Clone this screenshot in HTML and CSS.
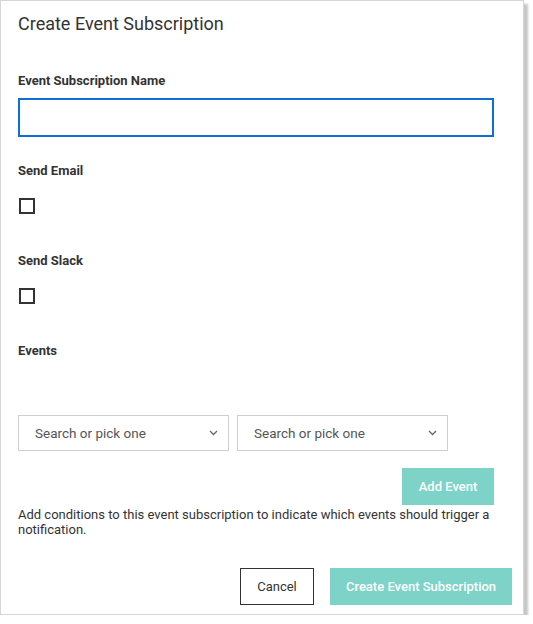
FILE: index.html
```html
<!DOCTYPE html>
<html>
<head>
<meta charset="utf-8">
<link rel="stylesheet" href="styles.css">
</head>
<body>
<div class="dialog">
  <h1 class="title">Create Event Subscription</h1>
  <div class="field name-field">
    <label class="label">Event Subscription Name</label>
    <div class="input"></div>
  </div>
  <div class="field check-field">
    <label class="label">Send Email</label>
    <div class="checkbox"></div>
  </div>
  <div class="field check-field">
    <label class="label">Send Slack</label>
    <div class="checkbox"></div>
  </div>
  <div class="field events-field">
    <label class="label">Events</label>
  </div>
  <div class="selects">
    <div class="select"><span>Search or pick one</span>
      <svg width="9" height="6" viewBox="0 0 9 6"><path d="M1 1l3.5 3.5L8 1" fill="none" stroke="#666" stroke-width="1.3"/></svg>
    </div>
    <div class="select"><span>Search or pick one</span>
      <svg width="9" height="6" viewBox="0 0 9 6"><path d="M1 1l3.5 3.5L8 1" fill="none" stroke="#666" stroke-width="1.3"/></svg>
    </div>
  </div>
  <div class="add-row"><button class="btn primary add">Add Event</button></div>
  <p class="help">Add conditions to this event subscription to indicate which events should trigger a notification.</p>
  <div class="footer">
    <button class="btn secondary">Cancel</button>
    <button class="btn primary create">Create Event Subscription</button>
  </div>
</div>
</body>
</html>
```
FILE: styles.css
```css
html, body { margin: 0; padding: 0; background: #fff; }
body { font-family: Roboto, "Liberation Sans", sans-serif; color: #333; }
.dialog {
  width: 522px;
  height: 613px;
  border: 1px solid #d6d6d6;
  box-shadow: 4px 4px 2px rgba(0,0,0,0.22);
}
.title {
  margin: 0;
  padding: 12px 0 0 17px;
  font-size: 18px;
  font-weight: 400;
  line-height: 22px;
  color: #333;
}
.field {
  padding-left: 17px;
  display: flex;
  flex-direction: column;
  align-items: flex-start;
}
.label { display: block; font-size: 13px; font-weight: 700; color: #333; line-height: 15px; }
.name-field { margin-top: 38px; }
.input {
  margin-top: 10px;
  width: 472px;
  height: 35px;
  border: 2px solid #0f6fd3;
}
.check-field { margin-top: 26px; }
.checkbox {
  margin-top: 20px;
  margin-bottom: 13px;
  margin-left: 1px;
  width: 12px; height: 12px;
  border: 2px solid #333;
}
.events-field { margin-top: 26px; }
.selects {
  margin-top: 57px;
  padding-left: 17px;
  display: flex;
  gap: 8px;
}
.select {
  height: 34px;
  border: 1px solid #cfcfcf;
  display: flex;
  align-items: center;
  justify-content: space-between;
  padding: 0 10px 0 16px;
  width: 183px;
  font-size: 13.5px;
  color: #555;
}
.add-row { display: flex; justify-content: flex-end; padding-right: 29px; margin-top: 17px; }
.btn {
  font-family: Roboto, "Liberation Sans", sans-serif;
  font-size: 13px;
  border: none;
  height: 37px;
  cursor: pointer;
}
.primary { background: #7dd3c7; color: #fff; font-weight: 500; }
.add { width: 92px; }
.help {
  margin: 2px 0 0 17px;
  font-size: 13px;
  line-height: 15px;
  color: #333;
  width: 490px;
}
.footer {
  margin-top: 31px;
  display: flex;
  justify-content: flex-end;
  gap: 16px;
  padding-right: 11px;
}
.secondary { background: #fff; border: 1px solid #333; color: #333; width: 74px; }
.create { width: 182px; }
```
